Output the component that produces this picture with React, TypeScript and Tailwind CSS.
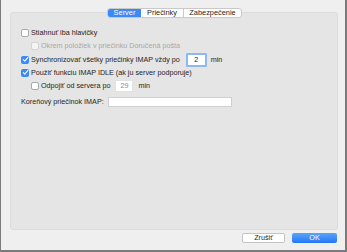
import React from "react";

function Check({ checked = false, disabled = false }: { checked?: boolean; disabled?: boolean }) {
  if (checked) {
    return (
      <div className="w-[8px] h-[8px] rounded-[2px] bg-[#3b89f6] flex items-center justify-center shrink-0">
        <svg width="7" height="7" viewBox="0 0 8 8">
          <path d="M1.5 4.2 L3.2 5.9 L6.6 1.9" fill="none" stroke="white" strokeWidth="1.3" strokeLinecap="round" strokeLinejoin="round" />
        </svg>
      </div>
    );
  }
  return (
    <div
      className={
        disabled
          ? "w-[8px] h-[8px] rounded-[2px] bg-[#f4f4f4] border border-[#d4d4d4] shrink-0"
          : "w-[8px] h-[8px] rounded-[2px] bg-white border border-[#a9a9a9] shrink-0"
      }
    />
  );
}

export default function App() {
  return (
    <div className="w-[347px] h-[252px] bg-[#efefef] border-l border-r-2 border-b-2 border-[#7b7b7b] font-['Liberation_Sans',Arial,sans-serif] text-[7.2px] text-[#242424] leading-none flex flex-col">
      <div className="pt-[12px] pl-[9px] pr-[7px]">
        <div className="h-[218px] rounded-[3px] bg-[#e5e5e5] border border-[#dcdcdc] flex flex-col">
          <div className="flex justify-center -mt-[5px] ml-[1px]">
            <div className="flex h-[10px] rounded-[3px] border border-[#c9c9c9] bg-white overflow-hidden text-[7.4px]">
              <div className="w-[33px] bg-[#3b89f6] text-white flex items-center justify-center">Server</div>
              <div className="w-[43px] border-r border-[#c9c9c9] flex items-center justify-center">Priečinky</div>
              <div className="w-[57px] flex items-center justify-center">Zabezpečenie</div>
            </div>
          </div>
          <div className="pl-[10px] pt-[8px] flex flex-col">
            <div className="h-[13px] flex items-center gap-[2px]">
              <Check />
              <span>Stiahnuť iba hlavičky</span>
            </div>
            <div className="h-[13px] flex items-center gap-[2px] pl-[10px] text-[#a8a8a8]">
              <Check disabled />
              <span>Okrem položiek v priečinku Doručená pošta</span>
            </div>
            <div className="h-[15px] flex items-center gap-[2px]">
              <Check checked />
              <span>Synchronizovať všetky priečinky IMAP vždy po</span>
              <div className="ml-[4px] w-[21px] h-[14px] bg-white border-2 border-[#8db8f3] rounded-[1px] flex items-center justify-center">2</div>
              <span className="ml-[2px]">min</span>
            </div>
            <div className="h-[11px] flex items-center gap-[2px]">
              <Check checked />
              <span>Použiť funkciu IMAP IDLE (ak ju server podporuje)</span>
            </div>
            <div className="h-[16px] flex items-center gap-[2px] pl-[10px]">
              <Check />
              <span>Odpojiť od servera po</span>
              <div className="ml-[3px] w-[18px] h-[12px] bg-white border border-[#e2e2e2] text-[#8a8a8a] flex items-center justify-center">29</div>
              <span className="ml-[3px]">min</span>
            </div>
            <div className="h-[16px] flex items-center gap-[4px]">
              <span>Koreňový priečinok IMAP:</span>
              <div className="w-[124px] h-[10px] bg-white border border-[#cfcfcf]" />
            </div>
          </div>
        </div>
      </div>
      <div className="flex justify-end gap-[7px] pr-[8px] mt-[3px]">
        <div className="w-[43px] h-[10px] bg-white border border-[#c4c4c4] rounded-[2px] flex items-center justify-center">Zrušiť</div>
        <div className="w-[45px] h-[10px] bg-gradient-to-b from-[#58a3fa] to-[#2277f5] text-white rounded-[2px] flex items-center justify-center">OK</div>
      </div>
    </div>
  );
}
